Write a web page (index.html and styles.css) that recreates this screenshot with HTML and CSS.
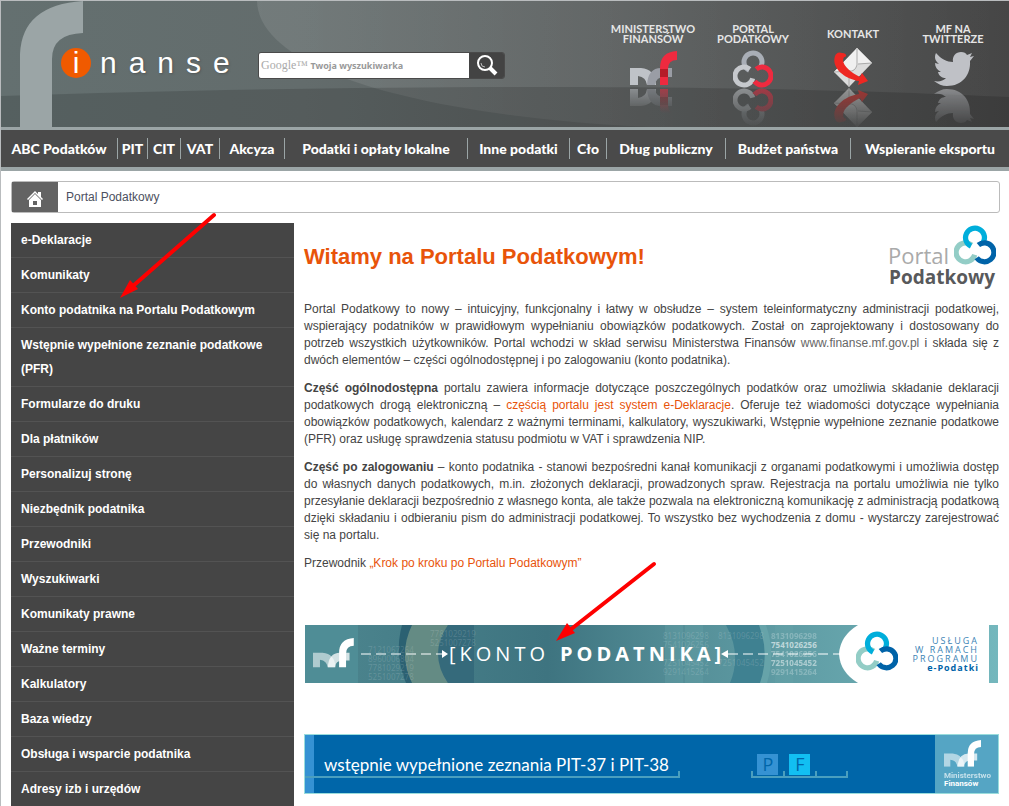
FILE: index.html
```html
<!DOCTYPE html>
<html lang="pl">
<head>
<meta charset="utf-8">
<title>Portal Podatkowy</title>
<link rel="stylesheet" href="styles.css">
</head>
<body>
<svg class="defs" aria-hidden="true">
  <defs>
    <symbol id="mf-m" viewBox="0 0 47 34"><path d="M0 17H11Q25 18 26 34H17Q16 26 8 25V34H0Z"/></symbol>
    <symbol id="mf-n" viewBox="0 0 47 34"><path d="M17 34Q18 17 31 17H42V26H34Q26 26 25 34Z"/></symbol>
    <symbol id="mf-f" viewBox="0 0 47 34"><path d="M30 34V17Q30 1 47 0V9Q38 9 38 18V34Z"/></symbol>
    <symbol id="ring-a" viewBox="0 0 40 38"><circle cx="20" cy="12" r="9" fill="none" stroke-width="5" pathLength="360" stroke-dasharray="285 75" transform="rotate(115 20 12)"/></symbol>
    <symbol id="ring-b" viewBox="0 0 40 38"><circle cx="11" cy="26" r="9" fill="none" stroke-width="5" pathLength="360" stroke-dasharray="295 65" transform="rotate(15 11 26)"/></symbol>
    <symbol id="ring-c" viewBox="0 0 40 38"><circle cx="29" cy="26" r="9" fill="none" stroke-width="5" pathLength="360" stroke-dasharray="275 85" transform="rotate(230 29 26)"/></symbol>
    <symbol id="bird" viewBox="0 0 40 34"><path d="M0 29C5 30 9 29 12 26 8 26 5 24 4 20L7 20C3 18 1 15 1 11L5 12C1 9 0 5 2 1 7 7 13 10 19 10 18 4 22 0 27 0 30 0 32 1 33 3L38 1 36 5 40 4 36 9C37 23 28 34 13 34 8 34 4 32 0 29Z"/></symbol>
    <symbol id="mail" viewBox="0 0 40 40">
      <path d="M24 0L39 15 16 39 1 24Z" fill="#dcdcdc"/>
      <path d="M24 0L39 15 25 16Q22 24 14 23L1 24Z" fill="#f0f0f0"/>
      <path d="M24 1L24 17Q22 24 16 23L1 24M25 16L39 15M16 23L16 39" fill="none" stroke="#aaa"/>
      <path d="M9 5C14 5 14 9 11 9 7 16 17 24 27 29L29 25 35 33 25 37 26 33C12 31 -2 20 2 8Q4 3 9 5Z" fill="#ee2722"/>
    </symbol>
    <g id="icon-mf"><use href="#mf-m" width="47" height="34" fill="#bfc3c8"/><use href="#mf-n" width="47" height="34" fill="#9a9da5"/><use href="#mf-f" width="47" height="34" fill="#ee2a3f"/><path d="M30 18H38V26H30Z" fill="#b51c28"/></g>
    <g id="icon-knot"><use href="#ring-a" width="40" height="38" stroke="#a9aeb6"/><use href="#ring-b" width="40" height="38" stroke="#c6c9cd"/><use href="#ring-c" width="40" height="38" stroke="#ee2a3f"/></g>
    <g id="knot-color"><use href="#ring-b" width="40" height="38" stroke="#93cdc6"/><use href="#ring-a" width="40" height="38" stroke="#00aedb"/><use href="#ring-c" width="40" height="38" stroke="#0063a8"/></g>
    <g id="mf-white" fill="#fff"><use href="#mf-m" width="47" height="34" opacity=".55"/><use href="#mf-n" width="47" height="34" opacity=".75"/><use href="#mf-f" width="47" height="34"/></g>
    <linearGradient id="fade" x1="0" y1="36" x2="0" y2="74" gradientUnits="userSpaceOnUse"><stop stop-color="#fff" stop-opacity=".55"/><stop offset="1" stop-color="#fff" stop-opacity=".05"/></linearGradient>
    <linearGradient id="fade-short" x1="0" y1="36" x2="0" y2="62" gradientUnits="userSpaceOnUse"><stop stop-color="#fff" stop-opacity=".55"/><stop offset="1" stop-color="#fff" stop-opacity="0"/></linearGradient>
    <mask id="mirror" maskUnits="userSpaceOnUse" x="0" y="36" width="50" height="40"><path d="M0 36H50V76H0Z" fill="url(#fade)"/></mask>
    <mask id="mirror-short" maskUnits="userSpaceOnUse" x="0" y="36" width="50" height="40"><path d="M0 36H50V76H0Z" fill="url(#fade-short)"/></mask>
  </defs>
</svg>

<div class="page">
  <header class="top">
    <svg class="top-bg" viewBox="0 0 1008 126" preserveAspectRatio="none" aria-hidden="true">
      <defs>
        <linearGradient id="sky"><stop stop-color="#647070"/><stop offset=".3" stop-color="#636c6c"/><stop offset=".6" stop-color="#5a5e5e"/><stop offset="1" stop-color="#464646"/></linearGradient>
        <linearGradient id="wave"><stop stop-color="#fff" stop-opacity=".1"/><stop offset="1" stop-color="#fff" stop-opacity="0"/></linearGradient>
      </defs>
      <path d="M0 0H1008V126H0Z" fill="url(#sky)"/>
      <path d="M256 0C258 70 420 115 650 126H1008V0Z" fill="url(#wave)"/>
      <path d="M0 95C200 88 400 86 550 86 750 86 900 91 1008 96V126H0Z" fill="#000" opacity=".14"/>
    </svg>
    <svg class="big-f" viewBox="0 0 63 127" aria-hidden="true"><path d="M0 127V53Q2 4 63 0V32Q32 33 32 58V127Z" fill="#9ba5a6"/></svg>
    <a class="brand" href="#"><span class="brand-i">i</span><span class="brand-rest">nanse</span></a>
    <form class="search">
      <label class="search-hint" for="q"><span class="google">Google™</span> Twoja wyszukiwarka</label>
      <input id="q" class="search-box" type="text">
      <button class="search-btn" type="button" aria-label="Szukaj">
        <svg width="22" height="22" viewBox="0 0 22 22"><circle cx="9" cy="8" r="7" fill="none" stroke="#fff" stroke-width="2"/><path d="M14 13L20 19" stroke="#fff" stroke-width="4"/><path d="M5 8Q5 12 9 12" stroke="#bbb" fill="none"/></svg>
      </button>
    </form>
    <nav class="shortcuts">
      <a href="#"><span>MINISTERSTWO FINANSÓW</span><svg width="50" height="76" viewBox="0 0 50 76"><use href="#icon-mf" x="2"/><g mask="url(#mirror-short)"><use href="#icon-mf" transform="translate(2 72) scale(1 -1)"/></g></svg></a>
      <a href="#"><span>PORTAL PODATKOWY</span><svg width="50" height="76" viewBox="0 0 50 76"><use href="#icon-knot" x="5" y="-1"/><g mask="url(#mirror)"><use href="#icon-knot" transform="translate(5 75) scale(1 -1)"/></g></svg></a>
      <a href="#"><span>KONTAKT</span><svg width="50" height="76" viewBox="0 0 50 76"><use href="#mail" x="5" y="-3" width="40" height="40"/><g mask="url(#mirror)"><use href="#mail" width="40" height="40" transform="translate(5 76) scale(1 -1)"/></g></svg></a>
      <a href="#"><span>MF NA TWITTERZE</span><svg width="50" height="76" viewBox="0 0 50 76" fill="#bfc1c6"><use href="#bird" x="6" y="1" width="40" height="34"/><g mask="url(#mirror)"><use href="#bird" width="40" height="34" transform="translate(6 72) scale(1 -1)"/></g></svg></a>
    </nav>
  </header>

  <nav class="menu">
    <a href="#">ABC Podatków</a><a href="#">PIT</a><a href="#">CIT</a><a href="#">VAT</a><a href="#">Akcyza</a><a href="#">Podatki i opłaty lokalne</a><a href="#">Inne podatki</a><a href="#">Cło</a><a href="#">Dług publiczny</a><a href="#">Budżet państwa</a><a href="#">Wspieranie eksportu</a>
  </nav>

  <div class="content">
    <div class="crumbs">
      <a class="home" href="#" aria-label="Strona główna"><svg width="16" height="16" viewBox="0 0 16 16" fill="#fff"><path d="M0 8L8 0 11 3V1H14V6L16 8 15 9 8 2 1 9Z"/><path d="M2 9L8 3 14 9V16H2ZM6 10V14H10V10Z" fill-rule="evenodd"/></svg></a>
      <span>Portal Podatkowy</span>
    </div>
    <div class="columns">
      <nav class="side">
        <a href="#">e-Deklaracje</a>
        <a href="#">Komunikaty</a>
        <a href="#">Konto podatnika na Portalu Podatkowym</a>
        <a href="#">Wstępnie wypełnione zeznanie podatkowe (PFR)</a>
        <a href="#">Formularze do druku</a>
        <a href="#">Dla płatników</a>
        <a href="#">Personalizuj stronę</a>
        <a href="#">Niezbędnik podatnika</a>
        <a href="#">Przewodniki</a>
        <a href="#">Wyszukiwarki</a>
        <a href="#">Komunikaty prawne</a>
        <a href="#">Ważne terminy</a>
        <a href="#">Kalkulatory</a>
        <a href="#">Baza wiedzy</a>
        <a href="#">Obsługa i wsparcie podatnika</a>
        <a href="#">Adresy izb i urzędów</a>
      </nav>
      <main class="main">
        <div class="title">
          <h1>Witamy na Portalu Podatkowym!</h1>
          <svg width="112" height="68" viewBox="0 0 112 68" role="img" aria-label="Portal Podatkowy">
            <use href="#knot-color" transform="translate(67 2) scale(1.050)"/>
            <text class="logo-light" x="1" y="41">Portal</text>
            <text class="logo-bold" x="2" y="61">Podatkowy</text>
          </svg>
        </div>
        <p>Portal Podatkowy to nowy – intuicyjny, funkcjonalny i łatwy w obsłudze – system teleinformatyczny administracji podatkowej, wspierający podatników w prawidłowym wypełnianiu obowiązków podatkowych. Został on zaprojektowany i dostosowany do potrzeb wszystkich użytkowników. Portal wchodzi w skład serwisu Ministerstwa Finansów <a class="plain" href="#">www.finanse.mf.gov.pl</a> i składa się z dwóch elementów – części ogólnodostępnej i po zalogowaniu (konto podatnika).</p>
        <p><strong>Część ogólnodostępna</strong> portalu zawiera informacje dotyczące poszczególnych podatków oraz umożliwia składanie deklaracji podatkowych drogą elektroniczną – <a href="#">częścią portalu jest system e-Deklaracje</a>. Oferuje też wiadomości dotyczące wypełniania obowiązków podatkowych, kalendarz z ważnymi terminami, kalkulatory, wyszukiwarki, Wstępnie wypełnione zeznanie podatkowe (PFR) oraz usługę sprawdzenia statusu podmiotu w VAT i sprawdzenia NIP.</p>
        <p><strong>Część po zalogowaniu</strong> – konto podatnika - stanowi bezpośredni kanał komunikacji z organami podatkowymi i umożliwia dostęp do własnych danych podatkowych, m.in. złożonych deklaracji, prowadzonych spraw. Rejestracja na portalu umożliwia nie tylko przesyłanie deklaracji bezpośrednio z własnego konta, ale także pozwala na elektroniczną komunikację z administracją podatkową dzięki składaniu i odbieraniu pism do administracji podatkowej. To wszystko bez wychodzenia z domu - wystarczy zarejestrować się na portalu.</p>
        <p>Przewodnik <a href="#">„Krok po kroku po Portalu Podatkowym”</a></p>

        <div class="banners">
        <a href="#">
          <svg viewBox="0 0 695 60">
            <defs><linearGradient id="teal"><stop stop-color="#4d868f"/><stop offset=".35" stop-color="#3e7480"/><stop offset=".55" stop-color="#558f98"/><stop offset="1" stop-color="#74b7bd"/></linearGradient>
            <clipPath id="frame"><path d="M1 1H694V59H1Z"/></clipPath></defs>
            <g clip-path="url(#frame)">
              <path d="M1 1H694V59H1Z" fill="url(#teal)"/>
              <path d="M1 1H54V59H1Z" fill="#4f8d96"/>
              <path d="M98 1H112V59H102Q90 30 98 1Z" fill="#2b6172"/>
              <path d="M108 1H144Q126 30 144 59H108Q94 30 108 1Z" fill="#648b84"/>
              <path d="M144 1H170V59H144Q124 30 144 1Z" fill="#356a7b"/>
              <path d="M370 1V59M390 1V59M480 1V59" stroke="#6aa6ab" opacity=".3" stroke-width="18"/>
              <path d="M422 1H456Q466 30 457 59H426Q438 30 422 1Z" fill="#3f8191"/>
              <path d="M455 1H462Q472 30 463 59H456Q466 30 455 1Z" fill="#66a3a9"/>
              <g class="digits"><text x="64" y="29">7121067264</text><text x="64" y="38">8960006804</text><text x="64" y="47">7781029219</text><text x="64" y="56">5251007278</text><text x="126" y="13">7781029219</text><text x="126" y="22">5251007278</text></g>
              <g class="digits"><text x="359" y="15">8131096298</text><text x="359" y="24">7541026256</text><text x="359" y="42">7251045452</text><text x="359" y="51">9291415264</text><text x="414" y="15">8131096298</text><text x="414" y="42">7251045452</text></g>
              <g class="digits bright"><text x="467" y="15" opacity=".4">8131096298</text><text x="467" y="24">7541026256</text><text x="467" y="33" opacity=".5">7541026256</text><text x="467" y="42" opacity=".8">7251045452</text><text x="467" y="51" opacity=".4">9291415264</text></g>
              <path d="M554 1H685V59H554Q536 48 535 30 536 12 554 1Z" fill="#fff"/>
              <path d="M57 30H138M424 30H536" stroke="#fff" stroke-dasharray="10 5"/>
              <path d="M138 26L144 30 138 34ZM424 26L417 30 424 34Z" fill="#fff"/>
              <use href="#mf-white" transform="translate(9 14) scale(.870)"/>
              <text class="konto" x="145" y="37">[KONTO</text>
              <text class="konto strong" x="256" y="37">PODATNIKA]</text>
              <use href="#knot-color" transform="translate(552 7) scale(1.050)"/>
              <g class="eprog"><text x="675" y="20">USŁUGA</text><text x="675" y="29">W RAMACH</text><text x="675" y="38">PROGRAMU</text><text class="dark" x="675" y="47">e-Podatki</text></g>
            </g>
          </svg>
        </a>
        <a href="#">
          <svg viewBox="0 0 695 60">
            <path d="M0 0H695V60H0Z" fill="#99dcdc"/>
            <path d="M1 1H694V59H1Z" fill="#0066a9"/>
            <path d="M1 1H10V59H1Z" fill="#3592d3"/>
            <path d="M631 1H694V59H631Z" fill="#55a5c4"/>
            <path d="M1 43H375V37M448 37V43H543V37M480 43V37M512 43V37" fill="none" stroke="#4a9fbf" stroke-width="2"/>
            <path d="M453 20H474V41H453Z" fill="#3592d3"/><path d="M485 20H506V41H485Z" fill="#12bff2"/>
            <text class="pit" x="20" y="37">wstępnie wypełnione zeznania PIT-37 i PIT-38</text>
            <text class="box" x="464" y="37">P</text><text class="box" x="496" y="37">F</text>
            <use href="#mf-white" transform="translate(640 6) scale(.790)"/>
            <g class="min"><text x="640" y="44" opacity=".65">Ministerstwo</text><text x="640" y="52">Finansów</text></g>
          </svg>
        </a>
        </div>
      </main>
    </div>
  </div>

  <svg class="arrow arrow-menu" width="98" height="88" viewBox="0 0 98 88" aria-hidden="true"><path d="M95 3L14 74" stroke="#fe0000" stroke-width="4" stroke-linecap="round"/><path d="M1 86L11 68 19 77Z" fill="#fe0000"/></svg>
  <svg class="arrow arrow-banner" width="102" height="82" viewBox="0 0 102 82" aria-hidden="true"><path d="M99 3L15 69" stroke="#fe0000" stroke-width="4" stroke-linecap="round"/><path d="M1 80L12 62 20 72Z" fill="#fe0000"/></svg>
</div>
</body>
</html>
```

FILE: styles.css
```css
* { box-sizing: border-box; }
body { margin: 0; background: #fff; color: #444; font: 12px/17px "Liberation Sans", Arial, sans-serif; }
a { color: #e8540a; text-decoration: none; }
.defs { position: absolute; width: 0; height: 0; }
.page { position: relative; border: solid #b9bcbe; border-width: 1px 0 0 1px; }

.top { position: relative; display: flex; align-items: flex-start; height: 129px; border-bottom: 3px solid #9ba5a6; }
.top-bg { position: absolute; inset: 0; width: 100%; height: 100%; }
.big-f { position: absolute; left: 19px; top: 0; width: 63px; height: 127px; }
.brand { position: relative; display: flex; align-items: center; gap: 9px; margin: 47px 0 0 60px; width: 197px; color: #fff; font-size: 30px; line-height: 30px; }
.brand-i { width: 30px; height: 30px; border-radius: 50%; background: #f05a00; text-align: center; }
.brand-rest { letter-spacing: 12px; text-shadow: 1px 1px 2px #4448; }
.search { position: relative; display: flex; margin-top: 51px; width: 247px; height: 27px; border: 1px solid #4a4a4a; border-radius: 3px; overflow: hidden; }
.search-box { flex: 1; min-width: 0; border: 0; padding: 0 6px; background: #fff; }
.search-hint { position: absolute; left: 2px; top: 0; color: #999; font: bold 9px/25px "Noto Sans", sans-serif; white-space: nowrap; }
.google { font: 12px/25px "Liberation Serif", serif; color: #aaa; }
.search-btn { width: 35px; padding: 0; border: 0; background: #434343; display: grid; place-items: center; }
.shortcuts { position: relative; display: grid; grid-template-columns: repeat(4, 100px); margin: 22px 6px 0 auto; }
.shortcuts a { display: flex; flex-direction: column; align-items: center; color: #e6e6e6; font: bold 11px/10px Lato, sans-serif; text-align: center; }
.shortcuts span { display: flex; align-items: center; justify-content: center; height: 21px; width: 86px; margin-bottom: 7px; }
.shortcuts svg { overflow: visible; }

.menu { display: grid; grid-template-columns: 117fr 30fr 33fr 39fr 65fr 183fr 102fr 37fr 119fr 125fr 158fr; align-items: center; height: 41px; background: #4a4a4a; border-bottom: 4px solid #9ba5a6; }
.menu a { color: #fff; font: 900 14px/21px Lato, sans-serif; text-align: center; white-space: nowrap; border-right: 1px solid #9ba5a6; }
.menu a:last-child { border: 0; }

.content { padding: 10px 9px 0 10px; }
.crumbs { display: flex; align-items: center; gap: 8px; height: 32px; border: 1px solid #bbb; border-radius: 3px; color: #4c5060; }
.home { display: grid; place-items: center; width: 46px; height: 30px; padding-top: 4px; background: #636363; }
.columns { display: flex; gap: 10px; margin-top: 10px; align-items: flex-start; }
.side { flex: 0 0 283px; background: #454545; }
.side a { display: block; padding: 5px 10px; color: #fff; font-weight: bold; line-height: 24px; border-bottom: 1px solid #535353; }
.side a:last-child { border: 0; }
.main { flex: 1; min-width: 0; padding-right: 1px; }
.title { display: flex; justify-content: space-between; height: 78px; }
h1 { margin: 20px 0 0; color: #e8540a; font-size: 22px; line-height: 28px; }
p { margin: 0 0 11px; text-align: justify; }
.plain { color: #666; }
.logo-light { font: 22px "Open Sans", sans-serif; fill: #aaa; }
.logo-bold { font: bold 19px "Open Sans", sans-serif; fill: #58595b; }

.banners { display: grid; gap: 50px; margin-top: 52px; }
.banners svg { display: block; width: 100%; }
.digits { font: 8px "Noto Sans", sans-serif; fill: #fff; fill-opacity: .15; }
.bright { fill-opacity: .6; font-weight: bold; }
.konto { font: 20px "Open Sans", sans-serif; fill: #fff; letter-spacing: 4px; }
.strong { font-weight: bold; }
.eprog { font: 9px "Open Sans", sans-serif; fill: #3a83b5; letter-spacing: 2px; text-anchor: end; }
.dark { font-weight: bold; fill: #0063a8; letter-spacing: 1px; }
.pit { font: 17px Lato, sans-serif; fill: #fff; }
.box { font: 18px "Open Sans", sans-serif; fill: #0066a9; text-anchor: middle; }
.min { font: bold 8px Roboto, sans-serif; fill: #fff; }

.arrow { position: absolute; fill: none; }
.arrow-menu { left: 118px; top: 211px; }
.arrow-banner { left: 554px; top: 560px; }
```
